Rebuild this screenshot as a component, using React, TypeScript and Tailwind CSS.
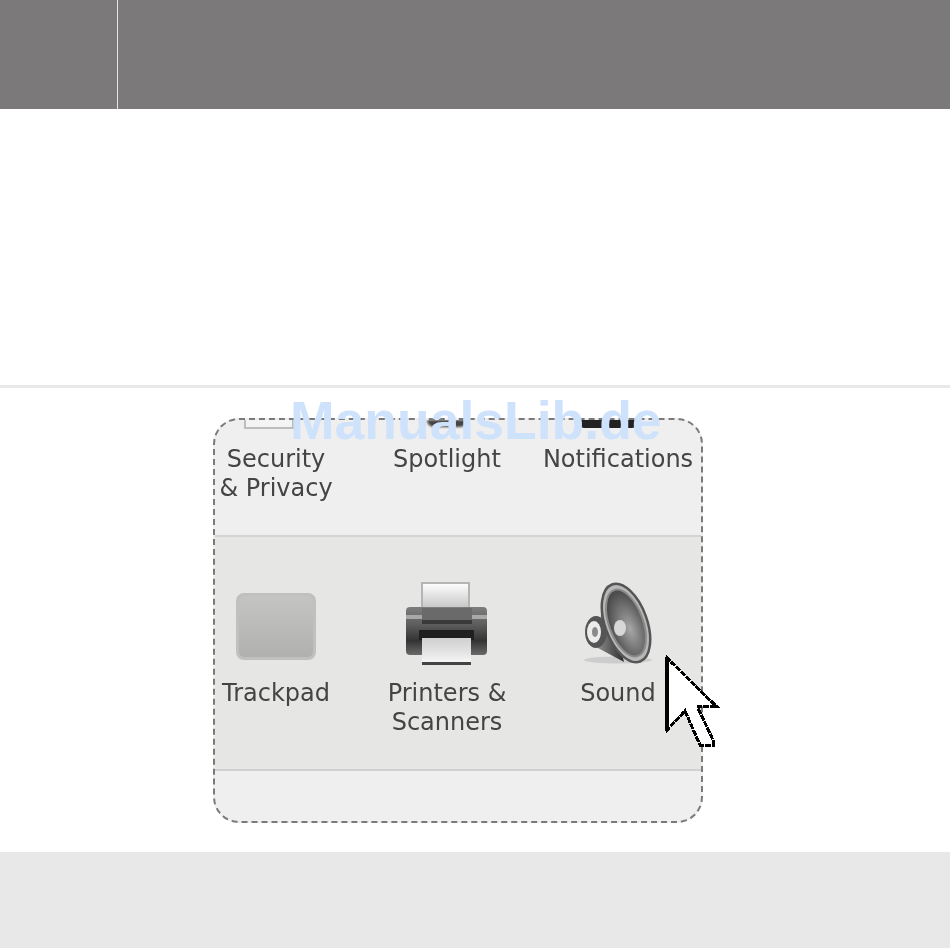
const labelClass =
  "text-center text-[24px] leading-[29px] text-[#444] font-['DejaVu_Sans',sans-serif] blur-[0.7px]";

function TrackpadIcon() {
  return (
    <div className="w-[80px] h-[67px] rounded-[8px] border-[3px] border-[#c0c0be] bg-gradient-to-b from-[#c4c4c2] to-[#b0b0ae] blur-[0.4px]" />
  );
}

function PrinterIcon() {
  return (
    <svg width="88" height="86" viewBox="0 0 88 86" className="blur-[0.6px]">
      <defs>
        <linearGradient id="paper" x1="0" y1="0" x2="0" y2="1">
          <stop offset="0" stopColor="#ffffff" />
          <stop offset="1" stopColor="#c4c4c4" />
        </linearGradient>
        <linearGradient id="body" x1="0" y1="0" x2="0" y2="1">
          <stop offset="0" stopColor="#7d7d7d" />
          <stop offset="0.35" stopColor="#5f5f5f" />
          <stop offset="0.7" stopColor="#333" />
          <stop offset="1" stopColor="#6a6a6a" />
        </linearGradient>
        <linearGradient id="output" x1="0" y1="0" x2="0" y2="1">
          <stop offset="0" stopColor="#cfcfcf" />
          <stop offset="0.6" stopColor="#e4e4e4" />
          <stop offset="1" stopColor="#f6f6f6" />
        </linearGradient>
      </defs>
      <rect x="19" y="3" width="47" height="26" fill="url(#paper)" stroke="#b5b5b5" strokeWidth="2" />
      <path d="M3 31 Q3 27 7 27 H80 Q84 27 84 31 V71 Q84 75 80 75 H7 Q3 75 3 71 Z" fill="url(#body)" />
      <rect x="3" y="35" width="81" height="4" fill="#a8a8a8" />
      <rect x="19" y="28" width="50" height="12" fill="#6a6a6a" />
      <rect x="19" y="40" width="50" height="4" fill="#3a3a3a" />
      <rect x="16" y="50" width="55" height="10" fill="#1f1f1f" />
      <rect x="19" y="58" width="49" height="24" fill="url(#output)" />
      <rect x="19" y="82" width="49" height="3" fill="#444" />
    </svg>
  );
}

function SoundIcon() {
  return (
    <svg width="72" height="84" viewBox="0 0 72 84" className="blur-[0.7px]">
      <defs>
        <radialGradient id="cone" cx="0.55" cy="0.6" r="0.65">
          <stop offset="0" stopColor="#a8a8a8" />
          <stop offset="0.5" stopColor="#737373" />
          <stop offset="1" stopColor="#3e3e3e" />
        </radialGradient>
        <linearGradient id="back" x1="0" y1="0" x2="1" y2="0">
          <stop offset="0" stopColor="#8a8a8a" />
          <stop offset="1" stopColor="#2e2e2e" />
        </linearGradient>
      </defs>
      <ellipse cx="36" cy="78" rx="34" ry="3.5" fill="#cdcdcd" />
      <path d="M24 6 L19 32 L16 66 L42 80 Z" fill="url(#back)" />
      <ellipse cx="14" cy="50" rx="11" ry="16" fill="#555" />
      <ellipse cx="12" cy="50" rx="7" ry="11" fill="#ececec" />
      <ellipse cx="13" cy="50" rx="3" ry="5" fill="#8a8a8a" />
      <ellipse cx="44" cy="41" rx="21" ry="41" transform="rotate(-20 44 41)" fill="#b8b8b8" stroke="#555" strokeWidth="2.5" />
      <ellipse cx="44" cy="41" rx="17" ry="35" transform="rotate(-20 44 41)" fill="url(#cone)" stroke="#8a8a8a" strokeWidth="2" />
      <ellipse cx="38" cy="46" rx="6" ry="8" fill="#d8d8d8" />
    </svg>
  );
}

function Cursor() {
  return (
    <svg width="56" height="96" viewBox="0 0 56 96" shapeRendering="crispEdges">
      <path
        d="M3 3 V75 L21 56 L36 90 H49 V85 L34 53 V51 H52 Z"
        fill="#fff"
        stroke="#000"
        strokeWidth="3"
        strokeDasharray="6 1"
      />
      <rect x="1" y="2" width="4" height="74" fill="#000" />
    </svg>
  );
}

export default function App() {
  return (
    <div className="relative w-[950px] h-[948px] overflow-hidden bg-white font-['Liberation_Sans',sans-serif]">
      <header className="flex h-[109px] bg-[#7b797a]">
        <div className="w-[118px] border-r border-[#e4e4e4]" />
      </header>

      <div className="h-[276px]" />
      <div className="h-[3px] bg-[#e8e8e8]" />

      <main className="h-[464px] pt-[30px] pl-[213px]">
        <div className="relative w-[490px] h-[405px] rounded-[26px] border-2 border-dashed border-[#7a7a7a] overflow-hidden flex flex-col bg-[#efefef]">
          <section className="h-[117px] shrink-0 flex gap-[49px] border-b-2 border-[#d4d4d2]">
            <div className="w-[122px] flex flex-col items-center">
              <div className="w-[50px] h-[9px] mr-[14px] border-2 border-t-0 border-[#bdbdbd] bg-[#f4f4f4]" />
              <div className={`${labelClass} mt-[16px] text-[#333]`}>
                Security
                <br />& Privacy
              </div>
            </div>
            <div className="w-[122px] flex flex-col items-center">
              <div className="w-[40px] h-[7px] rounded-b-full bg-[#444] blur-[1px]" />
              <div className={`${labelClass} mt-[18px] whitespace-nowrap`}>Spotlight</div>
            </div>
            <div className="w-[122px] flex flex-col items-center">
              <div className="w-[54px] h-[8px] mr-[20px] rounded-b-[3px] bg-[#222] blur-[0.5px]" />
              <div className={`${labelClass} mt-[17px] whitespace-nowrap`}>Notifications</div>
            </div>
          </section>

          <section className="h-[234px] shrink-0 flex gap-[49px] bg-[#e6e6e5] border-b-2 border-[#d0d0ce]">
            <div className="w-[122px] flex flex-col items-center pt-[56px]">
              <TrackpadIcon />
              <div className={`${labelClass} mt-[19px] whitespace-nowrap`}>Trackpad</div>
            </div>
            <div className="w-[122px] flex flex-col items-center pt-[43px]">
              <PrinterIcon />
              <div className={`${labelClass} mt-[13px] whitespace-nowrap`}>
                Printers &amp;
                <br />
                Scanners
              </div>
            </div>
            <div className="w-[122px] flex flex-col items-center pt-[45px]">
              <SoundIcon />
              <div className={`${labelClass} mt-[13px] whitespace-nowrap`}>Sound</div>
            </div>
          </section>

          <div className="flex-1" />
        </div>
      </main>

      <footer className="h-[96px] bg-[#e8e8e8]" />

      <div className="absolute left-[290px] top-[390px] text-[53.5px] leading-[62px] font-bold text-[#cfe2fb] whitespace-nowrap">
        ManualsLib.de
      </div>
      <div className="absolute left-[664px] top-[655px]">
        <Cursor />
      </div>
    </div>
  );
}
